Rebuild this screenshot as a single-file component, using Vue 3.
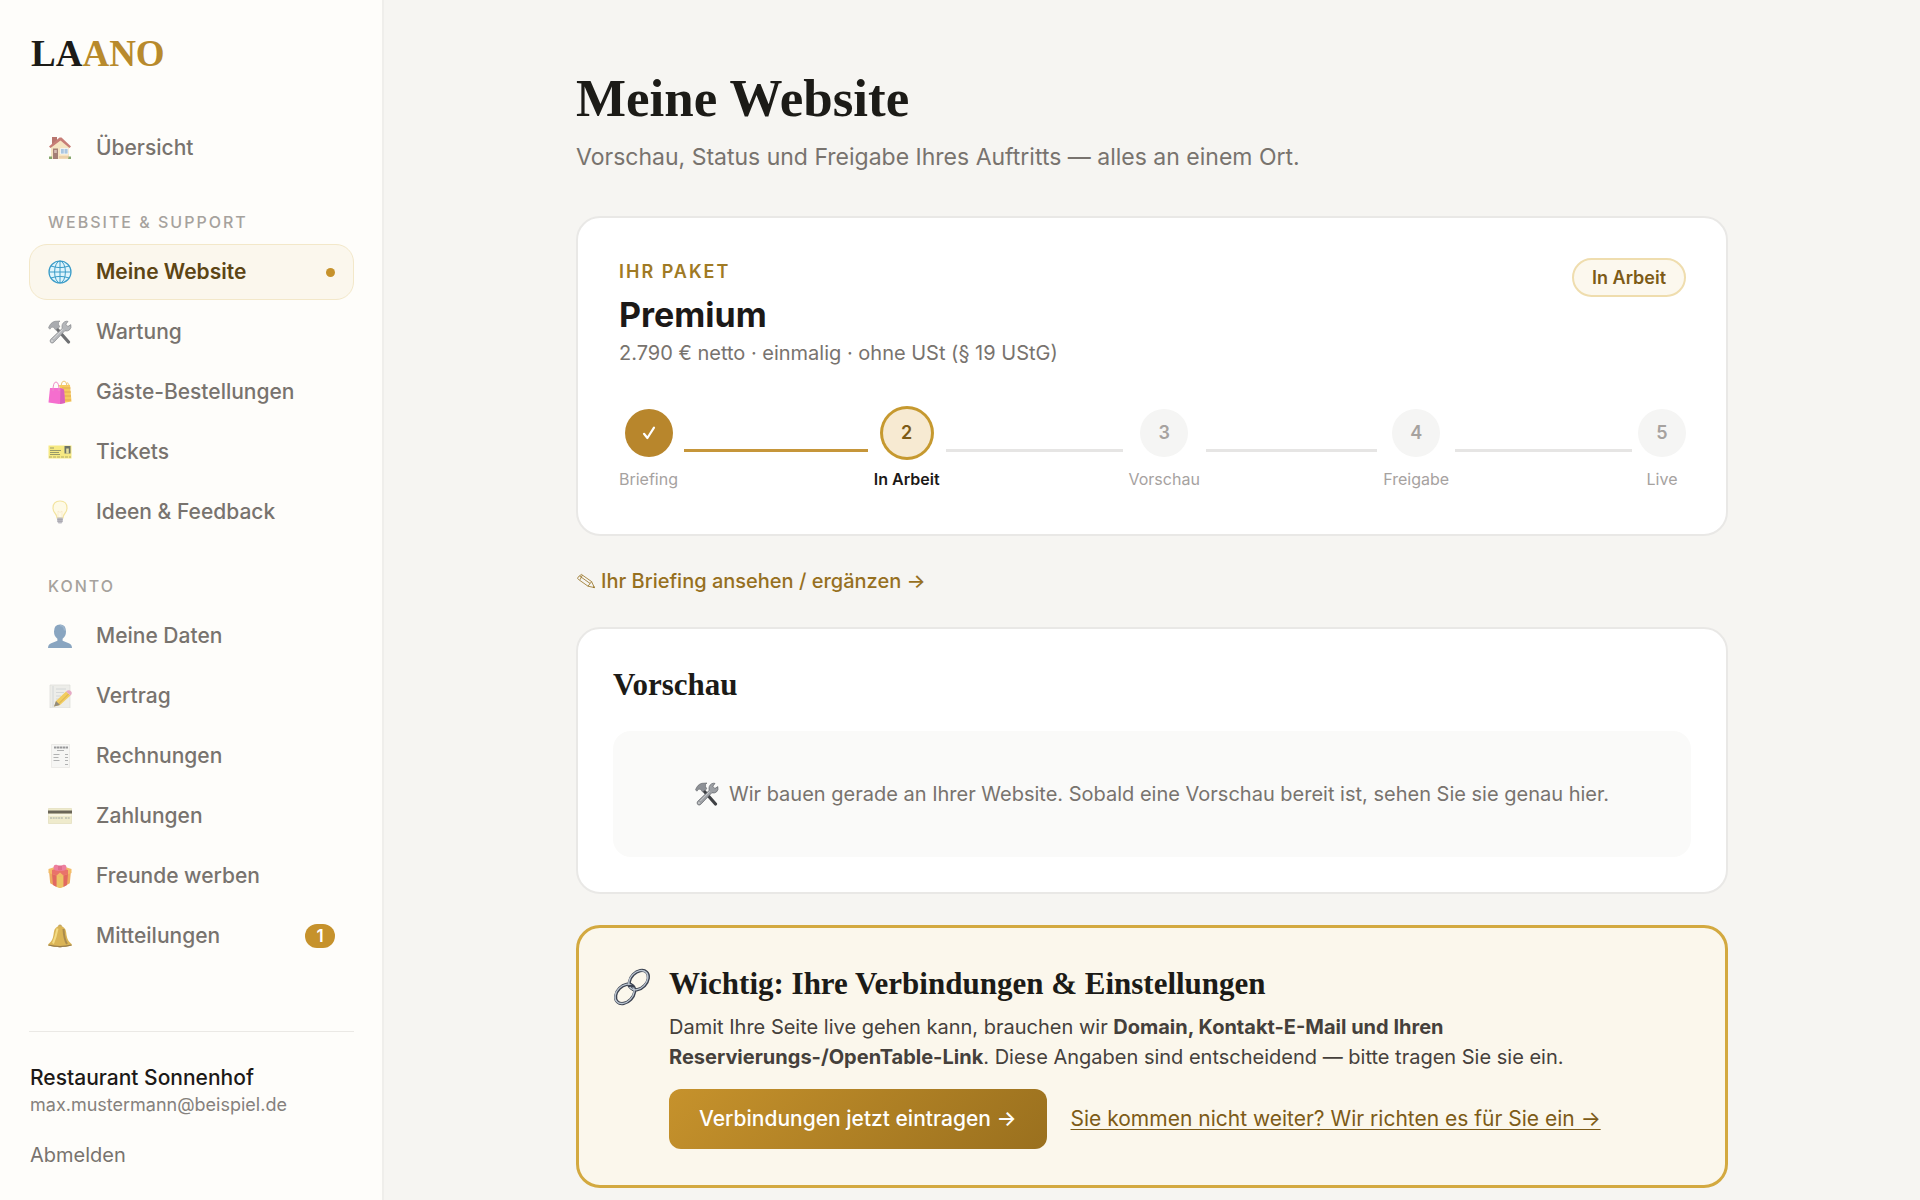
<template>
  <div class="portal">
    <aside class="sidebar">
      <a class="logo" href="#">LA<span>ANO</span></a>

      <nav class="nav">
        <div v-for="group in groups" :key="group.title" class="nav-group">
          <h2 v-if="group.title" class="nav-title">{{ group.title }}</h2>
          <a
            v-for="item in group.items"
            :key="item.label"
            href="#"
            class="nav-item"
            :class="{ active: item.label === current }"
            @click.prevent="current = item.label"
          >
            <svg class="nav-icon" viewBox="0 0 24 24" aria-hidden="true" v-html="icons[item.icon]"></svg>
            <span class="nav-label">{{ item.label }}</span>
            <span v-if="item.label === current" class="nav-dot"></span>
            <span v-else-if="item.badge" class="nav-badge">{{ item.badge }}</span>
          </a>
        </div>
      </nav>

      <div class="account">
        <div class="account-name">Restaurant Sonnenhof</div>
        <div class="account-mail">max.mustermann@beispiel.de</div>
        <button type="button" class="logout">Abmelden</button>
      </div>
    </aside>

    <main class="main">
      <div class="content">
        <header class="page-header">
          <h1>Meine Website</h1>
          <p>Vorschau, Status und Freigabe Ihres Auftritts — alles an einem Ort.</p>
        </header>

        <section class="card package">
          <div class="package-head">
            <div>
              <div class="eyebrow">Ihr Paket</div>
              <div class="package-name">Premium</div>
              <div class="package-price">2.790 € netto · einmalig · ohne USt (§ 19 UStG)</div>
            </div>
            <span class="status">In Arbeit</span>
          </div>

          <ol class="steps">
            <li v-for="(step, i) in steps" :key="step" :class="{ done: i < currentStep, now: i === currentStep }">
              <div class="step">
                <div class="circle">
                  <svg v-if="i < currentStep" viewBox="0 0 18 18" width="18" height="18" aria-label="Erledigt">
                    <path d="M4 9.8 7.4 14 14 3.6" fill="none" stroke="#fff" stroke-width="2.2" stroke-linecap="round" stroke-linejoin="round" />
                  </svg>
                  <template v-else>{{ i + 1 }}</template>
                </div>
                <div class="step-label">{{ step }}</div>
              </div>
              <div v-if="i < steps.length - 1" class="line"></div>
            </li>
          </ol>
        </section>

        <a class="briefing-link" href="#">
          <svg viewBox="0 0 20 18" width="20" height="18" aria-hidden="true" fill="none" stroke="currentColor" stroke-width=".8" stroke-linejoin="round">
            <path d="M2 5.2 5.4 2.4 15.6 9.6 18.4 15.6 12 14.2 2.4 7.4Q1 6.4 2 5.2Z" />
            <path d="M3.6 4 14 11.4M6.4 3 4 7.8M15.6 9.6 12 14.2M17 15.2 18.4 15.6 17.8 14.2" />
          </svg>
          <span>Ihr Briefing ansehen / ergänzen →</span>
        </a>

        <section class="card preview">
          <h2>Vorschau</h2>
          <div class="placeholder">
            <svg viewBox="0 0 24 24" width="24" height="24" aria-hidden="true" v-html="icons.tools"></svg>
            <span>Wir bauen gerade an Ihrer Website. Sobald eine Vorschau bereit ist, sehen Sie sie genau hier.</span>
          </div>
        </section>

        <section class="card notice">
          <svg class="notice-icon" viewBox="0 0 36 36" aria-hidden="true" v-html="icons.link"></svg>
          <div class="notice-body">
            <h2>Wichtig: Ihre Verbindungen &amp; Einstellungen</h2>
            <p>
              Damit Ihre Seite live gehen kann, brauchen wir
              <strong>Domain, Kontakt-E-Mail und Ihren Reservierungs-/OpenTable-Link</strong>.
              Diese Angaben sind entscheidend — bitte tragen Sie sie ein.
            </p>
            <div class="notice-actions">
              <button type="button" class="primary">Verbindungen jetzt eintragen →</button>
              <a class="help-link" href="#">Sie kommen nicht weiter? Wir richten es für Sie ein →</a>
            </div>
          </div>
        </section>
      </div>
    </main>
  </div>
</template>

<script setup>
import { ref } from 'vue'

const current = ref('Meine Website')
const currentStep = 1
const steps = ['Briefing', 'In Arbeit', 'Vorschau', 'Freigabe', 'Live']

const groups = [
  { title: '', items: [{ label: 'Übersicht', icon: 'house' }] },
  {
    title: 'Website & Support',
    items: [
      { label: 'Meine Website', icon: 'globe' },
      { label: 'Wartung', icon: 'tools' },
      { label: 'Gäste-Bestellungen', icon: 'bags' },
      { label: 'Tickets', icon: 'ticket' },
      { label: 'Ideen & Feedback', icon: 'bulb' }
    ]
  },
  {
    title: 'Konto',
    items: [
      { label: 'Meine Daten', icon: 'person' },
      { label: 'Vertrag', icon: 'memo' },
      { label: 'Rechnungen', icon: 'receipt' },
      { label: 'Zahlungen', icon: 'card' },
      { label: 'Freunde werben', icon: 'gift' },
      { label: 'Mitteilungen', icon: 'bell', badge: 1 }
    ]
  }
]

const icons = {
  house: `
    <path d="M4 1h5v6l-5 4z" fill="#a14a40"/>
    <path d="M3 11 12.500 3 21 11v12H3z" fill="#f3dcae"/>
    <path d="M1 10.500 11.500 1.500h2L23 10.500l-1.500 1.500L12.500 4.500 2.500 12z" fill="#b5534a"/>
    <path d="M5 12.500h5V23H5z" fill="#86564a"/><path d="M6.200 14h2.600v3H6.200z" fill="#c9a79b"/>
    <path d="M12.500 12.500h7.500v5.500h-7.500z" fill="#8fb4d6" stroke="#fff" stroke-width=".7"/>
    <path d="M16.200 12.500V18" stroke="#fff" stroke-width=".6"/>
    <path d="M1 20.500h3V23H1zM20 20.500h3V23h-3z" fill="#5d8a3c"/><path d="M11 20h9.500v2.500H11z" fill="#e6c18f"/>`,
  globe: `
    <circle cx="12" cy="12" r="11" fill="#dff5fc" stroke="#3a9cc8" stroke-width="1.200"/>
    <g fill="none" stroke="#3a9cc8" stroke-width="1"><ellipse cx="12" cy="12" rx="5.400" ry="11"/>
    <path d="M12 1v22M1 12h22M3 6q9 3.200 18 0M3 18q9-3.200 18 0"/></g>`,
  tools: `
    <path d="M9.500 9.500 20.500 22" stroke="#3f4145" stroke-width="3.200" stroke-linecap="round"/>
    <path d="M.5 7.800Q2.600 2.200 7 1.300L12 1Q9.800 2.200 10.600 4.600L11.800 6.800 7.600 10 5.800 7.600Q3.800 5.800 1.900 9.200z" fill="#8d9096" stroke="#62656a" stroke-width=".6"/>
    <path d="M2.800 22.600Q1.400 21 2.600 19.400L14.200 8.400Q13.200 4 16.400 1.900 18.200.8 20 1.400L17.800 4.200 19.800 6.600 22.800 4.600Q23.800 8 21.400 10 19.400 11.500 16.800 10.800L5.600 22.500Q4.200 23.600 2.800 22.600z" fill="#9da0a5" stroke="#5f6267" stroke-width=".7"/>
    <circle cx="4" cy="21" r=".8" fill="#e8e8e8"/><path d="M14.800 9.300 5.300 19" stroke="#d6d8da" stroke-width=".8"/>`,
  bags: `
    <path d="M11 5h11l1.500 16.500L15 23z" fill="#f4ba2c"/>
    <path d="M14 8h8.500M15 12h8M15 16h8M16 20h7" stroke="#d98c1b" stroke-width="1.200"/>
    <path d="M13 6q.5-5 3-5t3 5M18.500 5q.5-4.500 2.500 0" fill="none" stroke="#e9b44c" stroke-width="1"/>
    <path d="M2 8h10.500L16 9.500 17 23 11 24 .5 22.500z" fill="#f23fc0"/>
    <path d="M12.500 8 16 9.500 17 23l-5 1z" fill="#cf2da6"/>
    <path d="M5 11q0-9 3-9t3 9" fill="none" stroke="#e86bb8" stroke-width="1"/>`,
  ticket: `
    <path d="M.5 5.500h23v13H.5z" fill="#f4e35a"/>
    <path d="M16.500 6h6v7.500h-6z" fill="#3c4638"/><path d="M18.200 8.500h2.600v5h-2.600z" fill="#d9d380"/>
    <path d="M2 8h4M2 10.500h11M2 12.500h9M2 14.500h10" stroke="#777a3a" stroke-width="1"/>
    <path d="M1 17h22" stroke="#9a9238" stroke-width="1.200" stroke-dasharray="3 1"/>`,
  bulb: `
    <path d="M12 1q7 0 7 7 0 3-2.200 5.500Q15 15.500 15 18H9q0-2.500-1.800-4.500Q5 11 5 8q0-7 7-7z" fill="#fffae0" stroke="#f0dc82" stroke-width="1.200"/>
    <path d="M10 17V11l2 1.500 2-1.500v6" fill="none" stroke="#f6dcb4" stroke-width=".7"/>
    <path d="M9.200 17.500h5.600v4L13.500 23.500h-3L9.200 21.500z" fill="#aaa9b4"/>
    <path d="M9.200 19.300h5.600M9.500 21.200h5" stroke="#77757f" stroke-width=".7"/>`,
  person: `
    <path d="M12 .5q6 0 6 7 0 4.800-3.400 7.200v2.100l6.200 2.400Q24 20.500 24 24H0q0-3.500 3.200-4.800l6.200-2.400v-2.100Q6 12.300 6 7.500 6 .5 12 .5z" fill="#6388ad"/>
    <path d="M12 1.500q4.200 0 4.600 5" fill="none" stroke="#7d9ebe" stroke-width="1.500"/>`,
  memo: `
    <path d="M2 1h20v23H2z" fill="#e8e8e4" stroke="#d3d3cf" stroke-width=".7"/>
    <path d="M5 2v21M8 5h10M8 8.500h8M8 12h5M8 15h3M8 18h3" stroke="#bfc3c5" stroke-width=".8"/>
    <path d="M6 22.500 8 17 18 7.500l4.500 4L12 21z" fill="#efbd2d"/>
    <path d="M10 20.500 20.500 10" stroke="#c99416" stroke-width="1"/>
    <path d="M18 7.500Q21 5 23.200 7.500q1.500 2-.7 4z" fill="#dd8fb4"/><path d="M6 22.500 8 17l4 4z" fill="#6d6555"/>`,
  receipt: `
    <path d="M3.500.5h18v23h-18z" fill="#f4f4f2" stroke="#dededb" stroke-width=".7"/>
    <path d="M6 3.500h14" stroke="#77787a" stroke-width="2.200" stroke-dasharray="2.400 .5"/>
    <path d="M9 6.500h7M5.500 10.500h6M5.500 13.500h5M5.500 16.500h6M17 10.500h3M17 13.500h3M17 16.500h3M17 20.500h3" stroke="#98999b" stroke-width="1.100"/>`,
  card: `
    <path d="M.5 4.500h23v15H.5z" fill="#ebe6bd" stroke="#d3cda0" stroke-width=".6"/>
    <path d="M0 6.500h24v3H0z" fill="#393423"/><path d="M.5 10h23v2H.5z" fill="#f6f3da"/>
    <path d="M2 14h13M17 14h5" stroke="#a5aa99" stroke-width="1.500" stroke-dasharray="2 .7"/>`,
  gift: `
    <path d="M1 6.500 12 10l11-3.500-1.200 12.800Q17 22.500 12 24q-5-1.500-9.800-4.700z" fill="#e88f2c"/>
    <path d="M.5 5 10 2h4l9.500 3v4L12 12.500.5 9z" fill="#f0a838"/>
    <path d="M8.500 11.500 12 12.500l3.500-1V23L12 24l-3.500-1z" fill="#e6b234"/>
    <path d="M4 10 8.500 11.500V23L5 21zM20 10l-4.500 1.500V23l3.500-2z" fill="#d8382f"/>
    <path d="M4 10V6l8-2.500L20 6v4l-4.500 1.500-3.500-3-3.500 3z" fill="#e2453b"/>
    <path d="M12 6.500Q5 7.500 5.500 3 6 .2 8.500.8q3 .7 3.500 5.700zM12 6.500q7 1 6.500-3.500Q18 .2 15.500.8q-3 .7-3.500 5.700z" fill="#e85580"/>
    <path d="M10 1.500h4V6h-4z" fill="#d83e68"/>`,
  bell: `
    <circle cx="12" cy="21" r="2.600" fill="#97732b"/><circle cx="12" cy="2.500" r="2" fill="#b28a30"/>
    <path d="M12 2q5.500.5 6.200 6.500.5 6 2.800 9 2.500 2 3 4Q12 24.500 0 21.500q.5-2 3-4 2.300-3 2.800-9Q6.500 2.500 12 2z" fill="#cf9c20"/>
    <path d="M9.500 4.500q-1.500 8-4.500 15" fill="none" stroke="#f0d05c" stroke-width="2"/>
    <path d="M15.500 5q.5 10 3.500 15" fill="none" stroke="#8f6614" stroke-width="2"/>
    <path d="M.5 21Q12 24 23.500 21" fill="none" stroke="#745212" stroke-width="1.200"/>`,
  link: `
    <g fill="none"><g stroke="#3c4351" stroke-width="3">
    <ellipse cx="24.500" cy="11.500" rx="10.500" ry="7.500" transform="rotate(-46 24.500 11.500)"/>
    <ellipse cx="11.500" cy="24.500" rx="10.500" ry="7.500" transform="rotate(-46 11.500 24.500)"/></g>
    <g stroke="#bcc6d1" stroke-width="1.300">
    <ellipse cx="24" cy="11.500" rx="10.500" ry="7.500" transform="rotate(-46 24 11.500)"/>
    <ellipse cx="11" cy="24.500" rx="10.500" ry="7.500" transform="rotate(-46 11 24.500)"/></g>
    <path d="M14 17.500q3.500-1.500 6 .500" stroke="#3c4351" stroke-width="2"/></g>`
}
</script>

<style>
body {
  background: #f6f5f2;
}
</style>

<style scoped>
.portal {
  display: flex;
  min-height: 100vh;
  font-family: Inter, 'Noto Sans', sans-serif;
  font-size: 20px;
  line-height: 30px;
  color: #1c1917;
  background: #f6f5f2;
}

.portal * {
  box-sizing: border-box;
}

h1,
h2,
p {
  margin: 0;
}

a {
  color: inherit;
  text-decoration: none;
}

button {
  font: inherit;
  border: none;
  cursor: pointer;
}

.sidebar {
  display: flex;
  flex-direction: column;
  flex: none;
  width: 384px;
  padding: 31px 28px 30px 29px;
  background: #fefdfa;
  border-right: 2px solid #efeeeb;
}

.logo {
  padding-left: 2px;
  font-family: 'Liberation Serif', serif;
  font-size: 37px;
  font-weight: 700;
  line-height: 46px;
  color: #1c1b17;
}

.logo span {
  color: #b88a2c;
}

.nav {
  display: flex;
  flex-direction: column;
  gap: 32px;
  margin-top: 43px;
}

.nav-group {
  display: flex;
  flex-direction: column;
  gap: 4px;
}

.nav-title {
  padding: 0 19px;
  margin-bottom: 4px;
  font-size: 16px;
  font-weight: 500;
  line-height: 28px;
  letter-spacing: 2px;
  text-transform: uppercase;
  color: #a6a29d;
}

.nav-item {
  display: flex;
  align-items: center;
  gap: 24px;
  height: 56px;
  padding: 0 18px;
  border: 1px solid transparent;
  border-radius: 18px;
  font-size: 21px;
  font-weight: 500;
  color: #78736e;
}

.nav-item.active {
  color: #5d4514;
  font-weight: 600;
  background: #fbf7ed;
  border-color: #f3e8c9;
}

.nav-icon {
  width: 24px;
  height: 24px;
  opacity: 0.75;
}

.active .nav-icon {
  opacity: 1;
}

.nav-label {
  flex: 1;
}

.nav-dot {
  width: 9px;
  height: 9px;
  border-radius: 50%;
  background: #c6922c;
}

.nav-badge {
  min-width: 30px;
  border-radius: 12px;
  font-size: 17px;
  font-weight: 600;
  line-height: 24px;
  text-align: center;
  color: #fff;
  background: #c6922c;
}

.account {
  margin-top: auto;
  padding: 31px 1px 0;
  border-top: 1px solid #ebe9e5;
}

.account-name {
  font-size: 21px;
  font-weight: 500;
}

.account-mail {
  font-size: 18px;
  line-height: 24px;
  color: #85817d;
}

.logout {
  margin-top: 23px;
  padding: 0;
  line-height: 30px;
  color: #78736e;
  background: none;
}

.main {
  flex: 1;
  min-width: 0;
  padding: 66px 48px 12px;
}

.content {
  display: flex;
  flex-direction: column;
  max-width: 1152px;
  margin: 0 auto;
}

h1,
.card h2 {
  font-family: 'Liberation Serif', serif;
  font-weight: 700;
  color: #1c1b17;
}

h1 {
  font-size: 53px;
  line-height: 64px;
}

.page-header p {
  margin-top: 10px;
  font-size: 23px;
  line-height: 34px;
  color: #78736e;
}

.card {
  border: 2px solid #e9e8e6;
  border-radius: 24px;
  background: #fff;
}

.package {
  margin-top: 42px;
  padding: 40px 40px 42px 41px;
}

.package-head {
  display: flex;
  justify-content: space-between;
  align-items: flex-start;
}

.eyebrow {
  font-size: 18px;
  font-weight: 600;
  line-height: 28px;
  letter-spacing: 2px;
  text-transform: uppercase;
  color: #a07a24;
}

.package-name {
  margin-top: 8px;
  font-size: 34px;
  font-weight: 700;
  line-height: 42px;
}

.package-price {
  line-height: 34px;
  color: #78736e;
}

.status {
  padding: 0 18px;
  border: 2px solid #efddae;
  border-radius: 20px;
  font-size: 18px;
  font-weight: 600;
  line-height: 35px;
  color: #7d5b17;
  background: #fcf8ee;
}

.steps {
  display: flex;
  margin: 39px 0 0;
  padding: 0;
  list-style: none;
}

.steps li {
  display: flex;
  flex: 1;
  align-items: center;
}

.steps li:last-child {
  flex: none;
}

.step {
  display: flex;
  flex-direction: column;
  align-items: center;
  gap: 9px;
}

.circle {
  display: flex;
  align-items: center;
  justify-content: center;
  width: 48px;
  height: 48px;
  border-radius: 50%;
  font-size: 18px;
  font-weight: 600;
  color: #a6a29f;
  background: #f5f5f4;
}

.done .circle {
  background: #b8862c;
}

.now .circle {
  color: #7d5b17;
  background: #f7ead2;
  box-shadow: 0 0 0 3px #c6992f;
}

.step-label {
  font-size: 16px;
  line-height: 26px;
  color: #a6a29f;
}

.now .step-label {
  font-weight: 600;
  color: #1c1917;
}

.line {
  flex: 1;
  height: 3px;
  margin: 0 6px;
  background: #e6e5e4;
}

.done .line {
  background: #c6963a;
}

.briefing-link {
  display: flex;
  align-items: center;
  align-self: flex-start;
  gap: 5px;
  margin-top: 30px;
  font-weight: 500;
  color: #96701f;
}

.preview {
  margin-top: 31px;
  padding: 35px;
}

.card h2 {
  font-size: 31px;
  line-height: 42px;
}

.placeholder {
  display: flex;
  align-items: center;
  justify-content: center;
  gap: 10px;
  margin-top: 25px;
  padding: 48px 36px;
  border-radius: 18px;
  color: #78736e;
  background: #fafaf9;
}

.notice {
  display: flex;
  gap: 18px;
  margin-top: 31px;
  padding: 35px 34px 36px;
  border: 3px solid #d3a940;
  background: #fbf7ec;
}

.notice-icon {
  flex: none;
  width: 38px;
  height: 38px;
  margin-top: 5px;
}

.notice-body {
  flex: 1;
}

.notice-body p {
  max-width: 960px;
  margin-top: 7px;
  color: #45403b;
}

.notice-actions {
  display: flex;
  align-items: center;
  gap: 24px;
  margin-top: 17px;
}

.primary {
  height: 60px;
  padding: 0 30px;
  border-radius: 12px;
  font-size: 21px;
  font-weight: 500;
  color: #fff;
  background: linear-gradient(135deg, #c6922c, #9a701e);
}

.help-link {
  font-size: 21px;
  color: #7d5b17;
  text-decoration: underline;
  text-decoration-thickness: 1px;
  text-underline-offset: 3px;
}
</style>
